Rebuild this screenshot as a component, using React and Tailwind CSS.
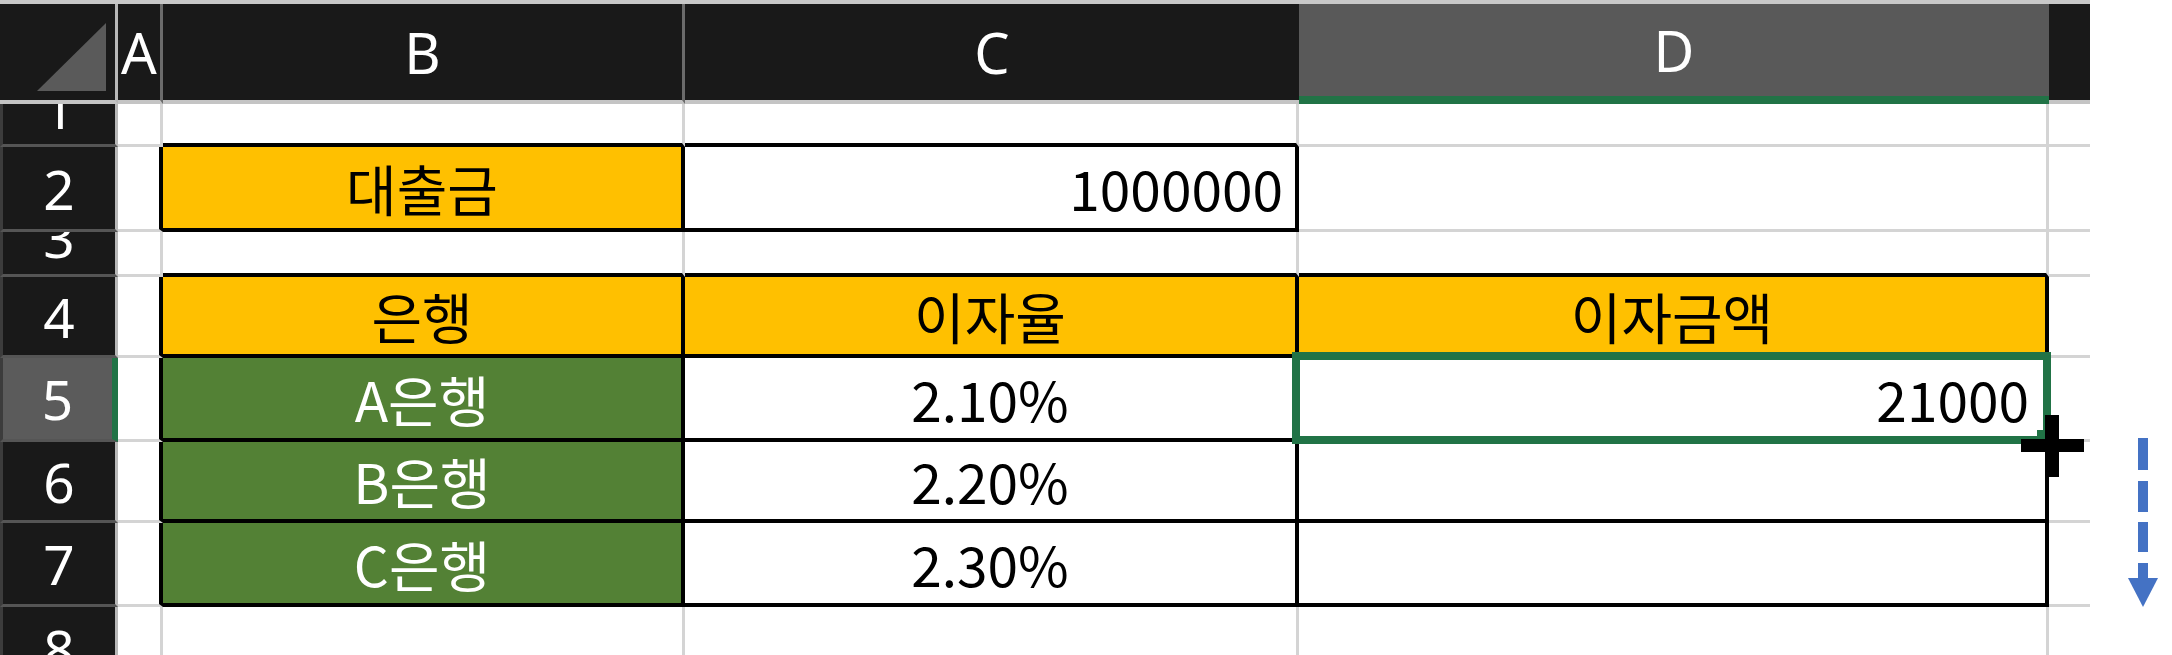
import React from 'react'

// 엑셀 채우기 핸들 화면 (D5 선택, 아래로 드래그)

const gR = 'border-r-[3px] border-r-[#d4d4d4]'
const kR = 'border-r-4 border-r-black'
const gB = 'border-b-[3px] border-b-[#d4d4d4]'
const kB = 'border-b-4 border-b-black'

const textBase = "flex items-center text-[55px] leading-none text-black font-['Noto_Sans_CJK_KR','Noto_Sans',sans-serif]"

function C({ className = '', children }) {
  return <div className={`${textBase} overflow-hidden ${className}`}>{children}</div>
}

function Head({ className = '', children }) {
  return (
    <div className={`flex items-center justify-center overflow-hidden text-white text-[56px] leading-none font-['Noto_Sans',sans-serif] border-b-4 ${className}`}>
      {children}
    </div>
  )
}

function RowNum({ n, short, active }) {
  return (
    <div
      className={`flex items-center justify-center overflow-hidden text-white text-[55px] leading-none font-['Noto_Sans',sans-serif] border-l-[3px] border-l-[#3c3c3c] border-b-[3px] border-b-[#555555] ${
        active ? 'bg-[#5b5b5b] border-r-[6px] border-r-[#217346]' : 'bg-[#191919] border-r-[3px] border-r-[#b8b8b8]'
      } ${short ? 'pb-[34px]' : ''}`}
    >
      {n}
    </div>
  )
}

function Rest() {
  return <div className="bg-white" />
}

export default function App() {
  return (
    <div className="relative w-[2172px] h-[655px] overflow-hidden bg-white">
      <div className="flex h-1">
        <div className="w-[2090px] bg-[#c8c8c8]" />
      </div>

      <div className="grid grid-cols-[118px_45px_522px_614px_750px_41px_1fr] grid-rows-[100px_43px_85px_45px_81px_84px_81px_84px_85px]">
        {/* column headers */}
        <div className="relative bg-[#191919] border-r-[3px] border-r-[#b8b8b8] border-b-4 border-b-[#c4c4c4]">
          <svg className="absolute left-0 top-0" width="115" height="96" viewBox="0 0 115 96">
            <polygon points="106,19 106,87 37,87" fill="#5a5a5a" />
          </svg>
        </div>
        <Head className="bg-[#191919] border-r-[3px] border-r-[#6b6b6b] border-b-[#c4c4c4]">A</Head>
        <Head className="bg-[#191919] border-r-[3px] border-r-[#6b6b6b] border-b-[#c4c4c4]">B</Head>
        <Head className="bg-[#191919] border-b-[#c4c4c4]">C</Head>
        <Head className="bg-[#595959] border-b-[8px] border-b-[#217346]">D</Head>
        <Head className="bg-[#191919] border-b-[#c4c4c4]" />
        <Rest />

        {/* 1 */}
        <RowNum n="1" short />
        <C className={`${gR} ${gB}`} />
        <C className={`${gR} ${kB}`} />
        <C className={`${gR} ${kB}`} />
        <C className={`${gR} ${gB}`} />
        <C className={gB} />
        <Rest />

        {/* 2 */}
        <RowNum n="2" />
        <C className={`${kR} ${gB}`} />
        <C className={`${kR} ${kB} bg-[#ffc000] justify-center`}>대출금</C>
        <C className={`${kR} ${kB} justify-end pr-[12px]`}>1000000</C>
        <C className={`${gR} ${gB}`} />
        <C className={gB} />
        <Rest />

        {/* 3 */}
        <RowNum n="3" short />
        <C className={`${gR} ${gB}`} />
        <C className={`${gR} ${kB}`} />
        <C className={`${gR} ${kB}`} />
        <C className={`${gR} ${kB}`} />
        <C className={gB} />
        <Rest />

        {/* 4 */}
        <RowNum n="4" />
        <C className={`${kR} ${gB}`} />
        <C className={`${kR} ${kB} bg-[#ffc000] justify-center`}>은행</C>
        <C className={`${kR} ${kB} bg-[#ffc000] justify-center`}>이자율</C>
        <C className={`${kR} ${kB} bg-[#ffc000] justify-center`}>이자금액</C>
        <C className={gB} />
        <Rest />

        {/* 5 */}
        <RowNum n="5" active />
        <C className={`${kR} ${gB}`} />
        <C className={`${kR} ${kB} bg-[#538135] text-white justify-center`}>A은행</C>
        <C className={`${kR} ${kB} justify-center`}>2.10%</C>
        <div className={`relative ${textBase} ${kR} ${kB} justify-end pr-[16px]`}>
          21000
          <div className="absolute z-10 -left-[7px] -top-[6px] -right-[6px] -bottom-[6px] border-[8px] border-[#217346]" />
        </div>
        <C className={gB} />
        <Rest />

        {/* 6 */}
        <RowNum n="6" />
        <C className={`${kR} ${gB}`} />
        <C className={`${kR} ${kB} bg-[#538135] text-white justify-center`}>B은행</C>
        <C className={`${kR} ${kB} justify-center`}>2.20%</C>
        <C className={`${kR} ${kB}`} />
        <C className={gB} />
        <Rest />

        {/* 7 */}
        <RowNum n="7" />
        <C className={`${kR} ${gB}`} />
        <C className={`${kR} ${kB} bg-[#538135] text-white justify-center`}>C은행</C>
        <C className={`${kR} ${kB} justify-center`}>2.30%</C>
        <C className={`${kR} ${kB}`} />
        <C className={gB} />
        <Rest />

        {/* 8 */}
        <RowNum n="8" />
        <C className={`${gR} ${gB}`} />
        <C className={`${gR} ${gB}`} />
        <C className={`${gR} ${gB}`} />
        <C className={`${gR} ${gB}`} />
        <C className={gB} />
        <Rest />
      </div>

      {/* fill handle cursor */}
      <svg className="absolute z-20 left-[2019px] top-[413px]" width="68" height="68" viewBox="0 0 68 68">
        <rect x="18" y="17" width="10" height="10" fill="#217346" />
        <rect x="2" y="26" width="63" height="13" fill="#000" />
        <rect x="26" y="2" width="14" height="62" fill="#000" />
      </svg>

      {/* drag direction arrow */}
      <svg className="absolute left-[2128px] top-[434px]" width="30" height="176" viewBox="0 0 30 176">
        <rect x="10" y="4" width="10" height="32" fill="#4472c4" />
        <rect x="10" y="47" width="10" height="31" fill="#4472c4" />
        <rect x="10" y="88" width="10" height="30" fill="#4472c4" />
        <rect x="10" y="129" width="10" height="17" fill="#4472c4" />
        <polygon points="0,144 30,144 15,173" fill="#4472c4" />
      </svg>
    </div>
  )
}
